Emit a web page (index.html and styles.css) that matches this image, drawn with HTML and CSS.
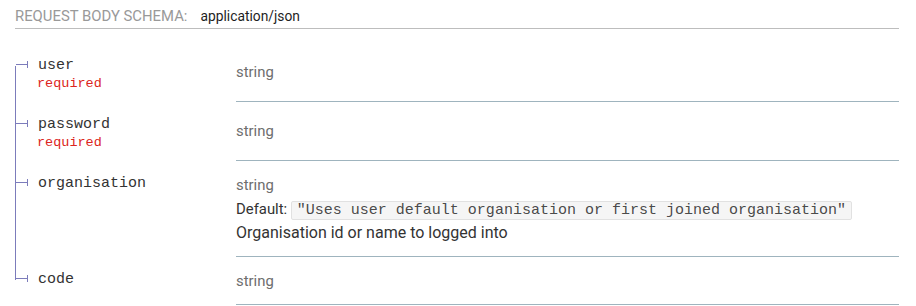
FILE: index.html
```html
<!DOCTYPE html>
<html lang="en">
<head>
<meta charset="utf-8">
<title>Request body schema</title>
<link rel="stylesheet" href="styles.css">
</head>
<body>
<div class="schema">
  <h5 class="body-header">Request Body schema:<span class="media-type">application/json</span></h5>
  <div class="props">
    <div class="prop first">
      <div class="prop-name"><span class="bullet"></span>user<div class="required">required</div></div>
      <div class="prop-details"><div class="type">string</div></div>
    </div>
    <div class="prop">
      <div class="prop-name"><span class="bullet"></span>password<div class="required">required</div></div>
      <div class="prop-details"><div class="type">string</div></div>
    </div>
    <div class="prop">
      <div class="prop-name"><span class="bullet"></span>organisation</div>
      <div class="prop-details">
        <div class="type">string</div>
        <div class="default">Default: <span class="example">"Uses user default organisation or first joined organisation"</span></div>
        <div class="desc">Organisation id or name to logged into</div>
      </div>
    </div>
    <div class="prop last">
      <div class="prop-name"><span class="bullet"></span>code</div>
      <div class="prop-details"><div class="type">string</div></div>
    </div>
  </div>
</div>
</body>
</html>
```

FILE: styles.css
```css
* {
  box-sizing: border-box;
}

body {
  margin: 0;
  background: #ffffff;
  font-family: Roboto, "Liberation Sans", sans-serif;
  color: #333333;
}

.schema {
  padding: 6px 17px 0 15px;
}

.body-header {
  margin: 0;
  padding-bottom: 2px;
  border-bottom: 1px solid #bdbdbd;
  font-size: 14.86px;
  line-height: 20px;
  font-weight: 400;
  color: #999999;
  text-transform: uppercase;
}

.media-type {
  margin-left: 13px;
  font-size: 13.8px;
  color: #1e1e1e;
  text-transform: none;
}

.props {
  margin-top: 14px;
}

.prop {
  display: flex;
}

.prop-name {
  flex: 0 0 221px;
  padding: 11.5px 10px 11.5px 1px;
  background: linear-gradient(#7c7cbb, #7c7cbb) left top / 1px 100% no-repeat;
  font-family: "Courier New", Courier, "Nimbus Mono PS", "Nimbus Mono L", FreeMono, "Liberation Mono", monospace;
  font-size: 15px;
  line-height: 22px;
  white-space: nowrap;
  color: #333333;
}

.prop.first .prop-name {
  background-image: linear-gradient(to bottom, transparent 23px, #7c7cbb 23px);
}

.prop.last .prop-name {
  background-image: linear-gradient(to bottom, #7c7cbb 23px, transparent 23px);
}

.bullet {
  margin-right: 10px;
}

.bullet::before {
  content: '';
  display: inline-block;
  vertical-align: middle;
  width: 11px;
  height: 1px;
  background: #7c7cbb;
}

.bullet::after {
  content: '';
  display: inline-block;
  vertical-align: middle;
  width: 1px;
  height: 7px;
  background: #7c7cbb;
}

.required {
  margin-left: 21px;
  font-size: 13.5px;
  line-height: 14px;
  color: #dc2420;
}

.prop-details {
  flex: 1;
  display: flex;
  flex-direction: column;
  justify-content: center;
  padding: 11.5px 0;
  border-bottom: 1px solid #9fb4be;
  font-size: 14.86px;
}

.type {
  line-height: 24px;
  color: #6e6e6e;
}

.default {
  line-height: 24px;
  color: #333333;
}

.example {
  padding: 0 5px;
  border: 1px solid rgba(51, 51, 51, 0.1);
  border-radius: 2px;
  background: rgba(51, 51, 51, 0.05);
  font-family: "Courier New", Courier, "Nimbus Mono PS", "Nimbus Mono L", FreeMono, "Liberation Mono", monospace;
  font-size: 15px;
  line-height: 16px;
  color: rgba(51, 51, 51, 0.9);
}

.desc {
  font-size: 16px;
  line-height: 24px;
  color: #333333;
}
```
